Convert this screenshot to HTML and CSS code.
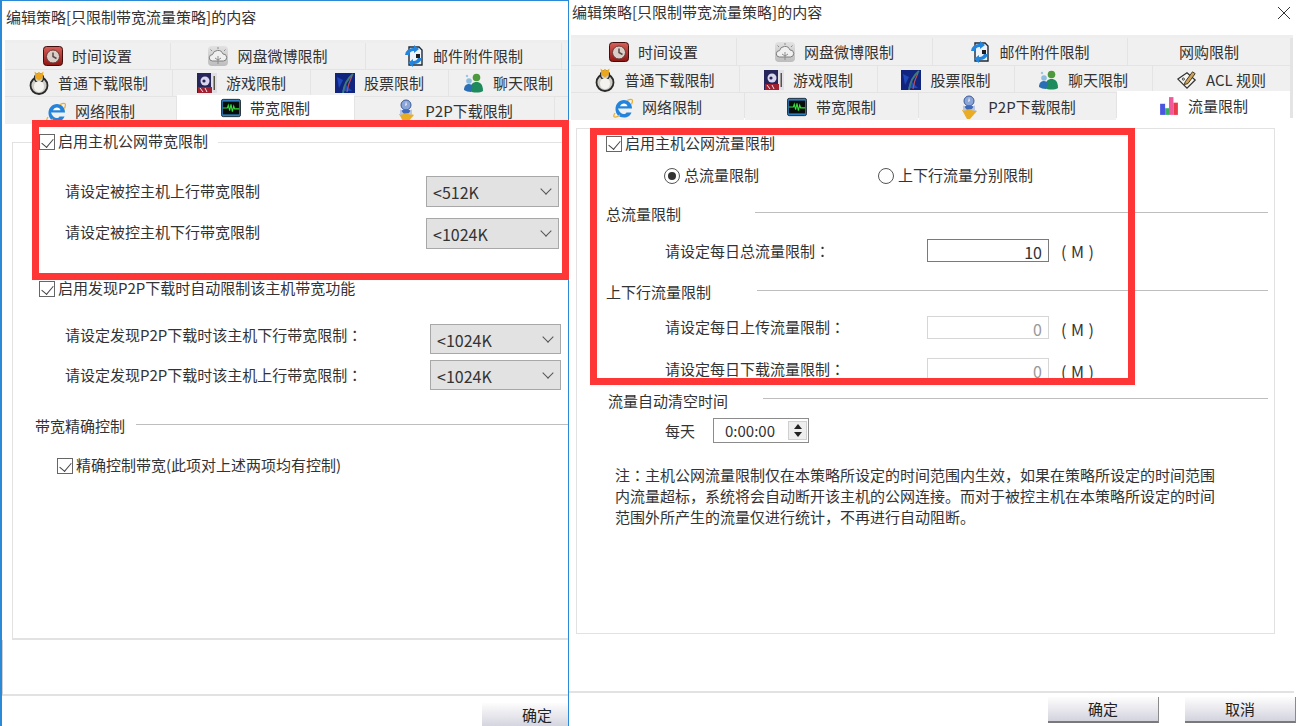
FILE: index.html
```html
<!DOCTYPE html>
<html lang="zh-CN">
<head>
    <meta charset="UTF-8">
    <meta name="viewport" content="width=device-width, initial-scale=1.0">
    <title>编辑策略</title>
    <link rel="stylesheet" href="styles.css">
</head>
<body>
    <svg class="icon-defs" width="0" height="0">
        <defs>
            <linearGradient id="gClock" x1="0" y1="0" x2="0" y2="1"><stop offset="0" stop-color="#d8605a"/><stop offset="1" stop-color="#8e1512"/></linearGradient>
            <linearGradient id="gCloud" x1="0" y1="0" x2="0" y2="1"><stop offset="0" stop-color="#e2e2e2"/><stop offset="1" stop-color="#bdbdbd"/></linearGradient>
            <symbol id="i-clock" viewBox="0 0 20 20">
                <rect x="0.500" y="0.500" width="19" height="19" rx="3" fill="url(#gClock)" stroke="#3e0f0d"/>
                <circle cx="10" cy="10.500" r="6.500" fill="#d9cfc8" stroke="#6e3a36"/>
                <path d="M10 6.500V10.500L13.500 12.500" fill="none" stroke="#5a4a45" stroke-width="1.500"/>
            </symbol>
            <symbol id="i-cloud" viewBox="0 0 20 20">
                <rect x="0" y="0" width="20" height="20" rx="4" fill="url(#gCloud)"/>
                <path d="M4.500 15a3.200 3.200 0 0 1 0-6.400a5.500 5.500 0 0 1 10.500-.6a3.500 3.500 0 0 1 .4 7z" fill="#f0f0f0" stroke="#7e7e7e"/>
                <path d="M10 3V1M4 5L2.500 3.500M16 5l1.500-1.500" stroke="#8c8c8c"/>
                <path d="M10 10v8M7 12l3 2 3-2" fill="none" stroke="#8c8c8c"/>
            </symbol>
            <symbol id="i-mail" viewBox="0 0 20 22">
                <path d="M5 2h10l3 3v15H5z" fill="#eef3fa" stroke="#1f2933" stroke-width="1.400"/>
                <path d="M1 10a8 8 0 0 1 9-7V0l5 4-5 4V6a5 5 0 0 0-5 4z" fill="#2384dc"/>
                <path d="M18 13a8 8 0 0 1-9 6v3l-5-4 5-4v2a5 5 0 0 0 5-3z" fill="#2384dc"/>
                <rect x="12" y="9" width="4" height="4" fill="#1d1d1d"/>
            </symbol>
            <symbol id="i-tux" viewBox="0 0 20 24">
                <ellipse cx="10" cy="14.500" rx="8.500" ry="8.500" fill="#cfcdc6" stroke="#2a2a2a" stroke-width="1.800"/>
                <circle cx="10" cy="7" r="4.500" fill="#cfcdc6" stroke="#2a2a2a" stroke-width="1.500"/>
                <path d="M5.500 0.500l2.500 2 2-1.500 2 1.500 2.500-2-1 6.500-3.500 2.500-3.500-2.500z" fill="#eba81f"/>
                <ellipse cx="10" cy="15.500" rx="5" ry="5.500" fill="#f3f2ee"/>
            </symbol>
            <symbol id="i-game" viewBox="0 0 20 20">
                <rect x="0" y="0" width="20" height="20" fill="#26265a"/>
                <rect x="14" y="0" width="6" height="20" fill="#e3dfe6"/>
                <rect x="16.500" y="3" width="1.500" height="14" fill="#554"/>
                <circle cx="8" cy="8" r="4.500" fill="#d9d6ee"/>
                <circle cx="7" cy="8" r="1.600" fill="#26265a"/>
                <path d="M1 14h14v6H1z" fill="#a02030"/>
                <path d="M3 15l3 4M8 15l2 4" stroke="#e8e4f0"/>
            </symbol>
            <symbol id="i-stock" viewBox="0 0 20 20">
                <rect width="20" height="20" fill="#12257e"/>
                <path d="M2 4l6 3-4 8zM11 12l6 6H7z" fill="#1f49b8"/>
                <path d="M8 20C9 12 12 6 18 1" fill="none" stroke="#3d7a78" stroke-width="2"/>
                <path d="M12 19C13 12 15 7 17 3" fill="none" stroke="#b5505a" stroke-width="1.200"/>
            </symbol>
            <symbol id="i-chat" viewBox="0 0 20 20">
                <circle cx="12.500" cy="4.500" r="3.800" fill="#4d9a3c"/>
                <path d="M6 18c0-7 3-9 6.500-9s6.500 2 6.500 9c-3 2-10 2-13 0z" fill="#1f8a5c"/>
                <circle cx="5" cy="8" r="2.800" fill="#8cbce0"/>
                <path d="M0 17c0-4 2-6 5-6 2 0 3 1 3.500 3L7 19c-3 0-5-1-7-2z" fill="#2a6eb5"/>
                <circle cx="3" cy="3" r="1.200" fill="#9cc6e6"/>
            </symbol>
            <symbol id="i-ie" viewBox="0 0 20 20">
                <path d="M5 10.500h14C19 5 15 2 11 2 6 2 2.500 6 2.500 11S6 19.500 11 19.500c3.500 0 6.500-2 7.500-5h-5c-.6 1-1.500 1.500-2.700 1.500C8.500 16 6 14 5 10.500z" fill="#2484dc"/>
                <path d="M7 8.300h7.500C14 6.500 12.700 5.500 11 5.500c-2 0-3.400 1.200-4 2.800z" fill="#fff"/>
                <path d="M2 15C-1 19.500 2 20.500 7 17M14 2.500c4-2 7-2 4.500 4" fill="none" stroke="#e8b030" stroke-width="1.300"/>
            </symbol>
            <symbol id="i-band" viewBox="0 0 22 20">
                <rect x="0.500" y="0.500" width="21" height="19" rx="2" fill="#2f7fc0" stroke="#1c2530"/>
                <rect x="2" y="3" width="18" height="14" fill="#060d0a"/>
                <path d="M2 10h5l1-3 1.500 6 1.500-7 1.500 8 1.500-6 1 3h5" fill="none" stroke="#36e03c" stroke-width="1.200"/>
            </symbol>
            <symbol id="i-p2p" viewBox="0 0 20 24">
                <circle cx="10" cy="6" r="5" fill="#8aa6d8" stroke="#3e5a9a"/>
                <path d="M5 12c2-2 8-2 10 0l-1 4H6z" fill="#3e68b8"/>
                <path d="M10 2l1 4-2 1z" fill="#e8e8f0"/>
                <path d="M3 15l9-1 6 2-7 8H8z" fill="#eaac22"/>
                <path d="M4 10l4 5-4 1zM16 10l-4 5 4 1z" fill="#b8c6e4"/>
            </symbol>
            <symbol id="i-acl" viewBox="0 0 22 22">
                <path d="M1 10L11 3l9 8-9 9z" fill="#f6f6f2" stroke="#333" stroke-width="1.400"/>
                <circle cx="7" cy="10" r="1.200" fill="none" stroke="#333"/>
                <path d="M9 13L17 2l3 2-8 11-4 1z" fill="#caa25a" stroke="#3a2e18"/>
            </symbol>
            <symbol id="i-flow" viewBox="0 0 16 18">
                <rect x="0" y="7" width="4.500" height="10" fill="#4a56e0"/>
                <rect x="4.500" y="11" width="3.500" height="6" fill="#38b060"/>
                <rect x="8" y="1" width="4" height="16" fill="#f05a9a"/>
                <rect x="12" y="6" width="4" height="11" fill="#ea3a4a"/>
            </symbol>
        </defs>
    </svg>

    <!-- left window -->
    <div class="window win-left">
        <div class="title">编辑策略[只限制带宽流量策略]的内容</div>
        <div class="tabs">
            <div class="tab-row left-row1">
                <div class="tab"><svg class="ico"><use href="#i-clock"/></svg>时间设置</div>
                <div class="tab"><svg class="ico"><use href="#i-cloud"/></svg>网盘微博限制</div>
                <div class="tab"><svg class="ico tall"><use href="#i-mail"/></svg>邮件附件限制</div>
                <div class="tab"></div>
            </div>
            <div class="tab-row left-row2">
                <div class="tab"><svg class="ico tall"><use href="#i-tux"/></svg>普通下载限制</div>
                <div class="tab"><svg class="ico"><use href="#i-game"/></svg>游戏限制</div>
                <div class="tab"><svg class="ico"><use href="#i-stock"/></svg>股票限制</div>
                <div class="tab"><svg class="ico"><use href="#i-chat"/></svg>聊天限制</div>
            </div>
            <div class="tab-row left-row3">
                <div class="tab"><svg class="ico big"><use href="#i-ie"/></svg>网络限制</div>
                <div class="tab active"><svg class="ico"><use href="#i-band"/></svg>带宽限制</div>
                <div class="tab"><svg class="ico tall"><use href="#i-p2p"/></svg>P2P下载限制</div>
                <div class="tab"></div>
            </div>
        </div>
        <div class="left-panel">
            <div class="legend">
                <span class="check"></span>启用主机公网带宽限制
            </div>
            <div class="sel-row first">
                <span>请设定被控主机上行带宽限制</span>
                <div class="select">&lt;512K<span class="chev"></span></div>
            </div>
            <div class="sel-row">
                <span>请设定被控主机下行带宽限制</span>
                <div class="select">&lt;1024K<span class="chev"></span></div>
            </div>
            <div class="check-row">
                <span class="check"></span>启用发现P2P下载时自动限制该主机带宽功能
            </div>
            <div class="sel-row wide first-p2p">
                <span>请设定发现P2P下载时该主机下行带宽限制<i class="colon" lang="zh-TW">：</i></span>
                <div class="select">&lt;1024K<span class="chev"></span></div>
            </div>
            <div class="sel-row wide">
                <span>请设定发现P2P下载时该主机上行带宽限制<i class="colon" lang="zh-TW">：</i></span>
                <div class="select">&lt;1024K<span class="chev"></span></div>
            </div>
            <div class="sec-head left-sec">带宽精确控制</div>
            <div class="check-row exact">
                <span class="check"></span>精确控制带宽(此项对上述两项均有控制)
            </div>
        </div>
        <div class="left-foot-box"></div>
        <div class="foot">
            <button class="btn">确定</button>
        </div>
    </div>

    <!-- right window -->
    <div class="window win-right">
        <div class="title">编辑策略[只限制带宽流量策略]的内容</div>
        <svg class="close" width="14" height="14" viewBox="0 0 14 14"><path d="M1 1L13 13M13 1L1 13" stroke="#333" fill="none"/></svg>
        <div class="tabs">
            <div class="tab-row right-row1">
                <div class="tab"><svg class="ico"><use href="#i-clock"/></svg>时间设置</div>
                <div class="tab"><svg class="ico"><use href="#i-cloud"/></svg>网盘微博限制</div>
                <div class="tab"><svg class="ico tall"><use href="#i-mail"/></svg>邮件附件限制</div>
                <div class="tab">网购限制</div>
            </div>
            <div class="tab-row right-row2">
                <div class="tab"><svg class="ico tall"><use href="#i-tux"/></svg>普通下载限制</div>
                <div class="tab"><svg class="ico"><use href="#i-game"/></svg>游戏限制</div>
                <div class="tab"><svg class="ico"><use href="#i-stock"/></svg>股票限制</div>
                <div class="tab"><svg class="ico"><use href="#i-chat"/></svg>聊天限制</div>
                <div class="tab"><svg class="ico"><use href="#i-acl"/></svg>ACL 规则</div>
            </div>
            <div class="tab-row right-row3">
                <div class="tab"><svg class="ico big"><use href="#i-ie"/></svg>网络限制</div>
                <div class="tab"><svg class="ico"><use href="#i-band"/></svg>带宽限制</div>
                <div class="tab"><svg class="ico tall"><use href="#i-p2p"/></svg>P2P下载限制</div>
                <div class="tab active"><svg class="ico"><use href="#i-flow"/></svg>流量限制</div>
            </div>
        </div>
        <div class="right-panel">
            <div class="check-row main-check">
                <span class="check"></span>启用主机公网流量限制
            </div>
            <div class="radio-row">
                <div class="radio-item total"><span class="radio on"></span>总流量限制</div>
                <div class="radio-item"><span class="radio"></span>上下行流量分别限制</div>
            </div>
            <div class="sec-head sec-total">总流量限制</div>
            <div class="num-row row-total">
                <span class="num-label">请设定每日总流量限制<i class="colon" lang="zh-TW">：</i></span>
                <div class="num-input">10</div>
                <span class="unit">( M )</span>
            </div>
            <div class="sec-head sec-updown">上下行流量限制</div>
            <div class="num-row row-up">
                <span class="num-label">请设定每日上传流量限制<i class="colon" lang="zh-TW">：</i></span>
                <div class="num-input off">0</div>
                <span class="unit low">( M )</span>
            </div>
            <div class="num-row row-down">
                <span class="num-label">请设定每日下载流量限制<i class="colon" lang="zh-TW">：</i></span>
                <div class="num-input off">0</div>
                <span class="unit low">( M )</span>
            </div>
            <div class="sec-head sec-clear">流量自动清空时间</div>
            <div class="time-row">
                <span>每天</span>
                <div class="time-box">0:00:00
                    <div class="spin"><span class="up"></span><span class="down"></span></div>
                </div>
            </div>
            <p class="note">注<i class="colon" lang="zh-TW">：</i>主机公网流量限制仅在本策略所设定的时间范围内生效，如果在策略所设定的时间范围<br>内流量超标，系统将会自动断开该主机的公网连接。而对于被控主机在本策略所设定的时间<br>范围外所产生的流量仅进行统计，不再进行自动阻断。</p>
        </div>
        <div class="foot">
            <button class="btn">确定</button>
            <button class="btn">取消</button>
        </div>
    </div>

    <!-- red marks drawn over the screenshot -->
    <div class="mark mark-left"></div>
    <div class="mark mark-right"></div>
</body>
</html>
```

FILE: styles.css
```css
* {
    box-sizing: border-box;
}
html, body {
    margin: 0;
    padding: 0;
}
body {
    width: 1296px;
    height: 726px;
    position: relative;
    overflow: hidden;
    background-color: #fff;
    font-family: "Noto Sans CJK SC", "Liberation Sans", sans-serif;
    font-size: 15px;
    line-height: 20px;
    color: #333;
}
.icon-defs {
    position: absolute;
}
.colon {
    font-family: "Noto Sans CJK TC", sans-serif;
    font-style: normal;
}
.window {
    position: absolute;
    top: 0;
    height: 726px;
    overflow: hidden;
    background-color: #fff;
}
.win-left {
    left: 0;
    width: 569px;
    border: 1px solid #2a8ad8;
    border-bottom: none;
    border-left-width: 2px;
}
.win-right {
    left: 569px;
    width: 727px;
}
.title {
    white-space: nowrap;
}
.win-left .title {
    height: 39px;
    padding: 6px 0 0 4px;
}
.win-right .title {
    height: 35px;
    padding: 2px 0 0 3px;
}
.close {
    position: absolute;
    top: 6px;
    right: 5px;
}

/* tabs */
.tabs {
    display: flex;
    flex-direction: column;
    gap: 1px;
    height: 83px;
    border-top: 3px solid #eeeeee;
    background-color: #e4e4e4;
}
.win-left .tabs {
    margin-left: 3px;
}
.win-right .tabs {
    margin-left: 2px;
    margin-right: 3px;
    padding-right: 3px;
}
.tab-row {
    display: grid;
    gap: 1px;
    height: 26px;
}
.left-row1 { grid-template-columns: 165px 194px 195px 1fr; }
.left-row2 { grid-template-columns: 167px 137px 137px 1fr; }
.left-row3 { grid-template-columns: 171px 177px 199px 1fr; }
.right-row1 { grid-template-columns: 165px 195px 194px 1fr; height: 27px; }
.right-row2 { grid-template-columns: 168px 137px 136px 137px 1fr; }
.right-row3 { grid-template-columns: 173px 173px 197px 1fr; height: 25px; }
.tab {
    background-color: #f0f0f0;
    display: flex;
    align-items: center;
    justify-content: center;
    gap: 9px;
    white-space: nowrap;
}
.right-row2 .tab {
    padding-top: 2px;
}
.tab.active {
    background-color: #fff;
    height: 29px;
    margin-top: -2px;
    position: relative;
}
.left-row3 .tab.active {
    padding-bottom: 4px;
}
.ico {
    width: 20px;
    height: 20px;
    flex: none;
}
.ico.tall {
    height: 24px;
}
.ico.big {
    height: 22px;
    margin-top: 2px;
}

/* controls */
.check {
    display: inline-block;
    width: 16px;
    height: 16px;
    border: 1px solid #666;
    background-color: #fff;
    margin-right: 3px;
    vertical-align: -3px;
    position: relative;
}
.check::after {
    content: "";
    position: absolute;
    left: 4px;
    top: 1px;
    width: 6px;
    height: 10px;
    border-right: 1.300px solid #444;
    border-bottom: 1.300px solid #444;
    transform: rotate(40deg);
}
.radio {
    display: inline-block;
    width: 16px;
    height: 16px;
    border: 1px solid #555;
    border-radius: 50%;
    background-color: #fff;
    margin-right: 4px;
    vertical-align: -3px;
    position: relative;
}
.radio.on::after {
    content: "";
    position: absolute;
    left: 3px;
    top: 3px;
    width: 8px;
    height: 8px;
    border-radius: 50%;
    background-color: #333;
}
.select {
    width: 133px;
    height: 31px;
    background-color: #e2e2e2;
    border: 1px solid #a8a8a8;
    padding-left: 6px;
    font-size: 16px;
    line-height: 30px;
    position: relative;
}
.chev {
    position: absolute;
    right: 8px;
    top: 8px;
    width: 8px;
    height: 8px;
    border-right: 1px solid #555;
    border-bottom: 1px solid #555;
    transform: rotate(45deg);
}

/* left window panel */
.left-panel {
    margin: 19px 0 0 10px;
    height: 498px;
    border: 1px solid #e2e2e2;
    border-bottom-width: 2px;
    border-right: none;
    position: relative;
}
.legend {
    position: absolute;
    top: -11px;
    left: 26px;
    padding-right: 10px;
    background-color: #fff;
    line-height: 18px;
    white-space: nowrap;
}
.sel-row {
    display: flex;
    align-items: center;
    justify-content: space-between;
    padding-left: 52px;
    width: 546px;
}
.sel-row > span {
    margin-bottom: 4px;
}
.sel-row.first {
    margin-top: 33px;
}
.sel-row.first > span {
    margin-bottom: 2px;
}
.sel-row + .sel-row {
    margin-top: 11px;
}
.sel-row.wide {
    width: 548px;
}
.sel-row.wide > span {
    margin-bottom: 0;
}
.sel-row.wide.first-p2p > span {
    margin-bottom: 9px;
}
.sel-row.wide + .sel-row.wide {
    margin-top: 6px;
}
.check-row {
    white-space: nowrap;
}
.left-panel > .check-row {
    margin: 29px 0 0 26px;
}
.sel-row.first-p2p {
    margin-top: 26px;
}
.sel-row.wide .select {
    height: 30px;
    width: 131px;
}
.sec-head {
    display: flex;
    align-items: center;
    white-space: nowrap;
}
.sec-head::after {
    content: "";
    height: 1px;
    background-color: #bebebe;
    flex: 1;
    margin-bottom: 4px;
}
.left-sec {
    margin: 26px 0 0 22px;
    gap: 11px;
}
.left-panel > .check-row.exact {
    margin: 19px 0 0 44px;
}
.left-foot-box {
    height: 56px;
    border-left: 1px solid #cfcfcf;
    border-bottom: 2px solid #e2e2e2;
}
.win-left .foot {
    display: flex;
    margin: 7px 0 0 480px;
}

/* right window panel */
.right-panel {
    height: 506px;
    margin: 10px 21px 0 7px;
    padding-left: 29px;
    padding-right: 6px;
    border: 1px solid #e2e2e2;
}
.main-check {
    margin-top: 4px;
}
.radio-row {
    display: flex;
    margin: 12px 0 0 58px;
    white-space: nowrap;
}
.radio-item.total {
    width: 214px;
}
.sec-total { gap: 74px; margin-top: 19px; }
.sec-updown { gap: 46px; margin-top: 20px; }
.sec-clear { gap: 35px; margin: 10px 0 0 2px; }
.sec-clear::after {
    margin-bottom: 6px;
}
.num-row {
    display: flex;
    align-items: center;
    padding-left: 59px;
}
.num-label {
    width: 262px;
}
.num-input {
    width: 122px;
    height: 23px;
    border: 1px solid #7a7a7a;
    padding-right: 6px;
    text-align: right;
    font-size: 16px;
    line-height: 25px;
}
.num-input.off {
    border-color: #d6d6d6;
    color: #9a9a9a;
}
.unit {
    margin-left: 12px;
    font-size: 16px;
    word-spacing: 1px;
}
.unit.low {
    margin-top: 4px;
}
.row-total { margin-top: 15px; }
.row-up { margin-top: 13px; }
.row-down { margin-top: 18px; }
.time-row {
    display: flex;
    align-items: center;
    gap: 18px;
    padding-left: 59px;
    margin-top: 7px;
}
.time-box {
    width: 96px;
    height: 25px;
    border: 1px solid #8c8c8c;
    padding-left: 11px;
    line-height: 23px;
    position: relative;
}
.spin {
    position: absolute;
    right: 1px;
    top: 2px;
    width: 19px;
    height: 19px;
    border: 1px solid #d0d0d0;
    background-color: #eee;
}
.spin span {
    position: absolute;
    left: 5px;
    width: 0;
    height: 0;
    border-left: 4px solid transparent;
    border-right: 4px solid transparent;
}
.spin .up {
    top: 2px;
    border-bottom: 5px solid #222;
}
.spin .down {
    bottom: 2px;
    border-top: 5px solid #222;
}
.note {
    margin: 21px 0 0 9px;
    line-height: 21px;
    white-space: nowrap;
}
.win-right .foot {
    height: 35px;
    border-top: 2px solid #e2e2e2;
    margin: 57px 2px 0 0;
    padding: 4px 0 0 479px;
    display: flex;
    gap: 26px;
}
.btn {
    width: 111px;
    height: 26px;
    flex: none;
    border: none;
    border-right: 1px solid #8a8a8a;
    border-bottom: 2px solid #7a7a7a;
    background: linear-gradient(#fdfdfd, #d3d3de);
    font: inherit;
    color: #222;
    padding: 0;
}

/* overlays */
.mark {
    position: absolute;
    border: 7px solid #ff3636;
}
.mark-left {
    left: 32px;
    top: 120px;
    width: 537px;
    height: 160px;
}
.mark-right {
    left: 590px;
    top: 128px;
    width: 545px;
    height: 257px;
}
```
